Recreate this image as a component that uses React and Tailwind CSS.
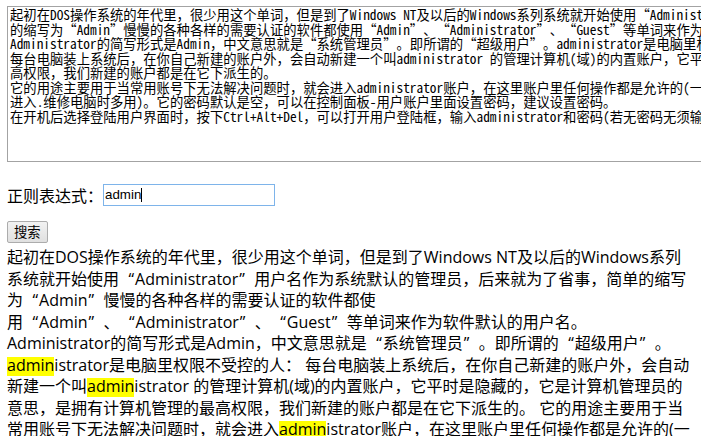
import React from "react";

const taText = [
  "起初在DOS操作系统的年代里，很少用这个单词，但是到了Windows NT及以后的Windows系列系统就开始使用“Administrator”用户名作为系统默认的管理员，后来就为了省事，简单",
  "的缩写为“Admin”慢慢的各种各样的需要认证的软件都使用“Admin”、“Administrator”、“Guest”等单词来作为软件默认的用户名。",
  "Administrator的简写形式是Admin，中文意思就是“系统管理员”。即所谓的“超级用户”。administrator是电脑里权限不受控的人：",
  "每台电脑装上系统后，在你自己新建的账户外，会自动新建一个叫administrator 的管理计算机(域)的内置账户，它平时是隐藏的，它是计算机管理员的意思，是拥有计算机管理的最",
  "高权限，我们新建的账户都是在它下派生的。",
  "它的用途主要用于当常用账号下无法解决问题时，就会进入administrator账户，在这里账户里任何操作都是允许的(一般在安全模式下才能",
  "进入.维修电脑时多用)。它的密码默认是空，可以在控制面板-用户账户里面设置密码，建议设置密码。",
  "在开机后选择登陆用户界面时，按下Ctrl+Alt+Del，可以打开用户登陆框，输入administrator和密码(若无密码无须输入)即可登陆。",
].join("\n");

function Hl({ children }) {
  return (
    <span className="inline-block bg-[#ffff00] leading-[17px] pb-[2px]">
      {children}
    </span>
  );
}

function T({ s }) {
  const parts = s.split(/([“”])/);
  return parts.map((p, i) => {
    if (p === "“")
      return (
        <span key={i} className="inline-block w-[16px] text-right leading-none pr-[1px]">
          {p}
        </span>
      );
    if (p === "”")
      return (
        <span key={i} className="inline-block w-[16px] text-left leading-none pl-[1px]">
          {p}
        </span>
      );
    return <React.Fragment key={i}>{p}</React.Fragment>;
  });
}

export default function App() {
  return (
    <div className="w-screen h-screen overflow-hidden bg-white text-black">
      <div className="flex flex-col items-start pl-[7px] pt-[6px]">
        <textarea
          readOnly
          wrap="off"
          lang="zh-CN"
          value={taText}
          className="w-[900px] h-[156px] shrink-0 resize-none overflow-hidden whitespace-pre border border-[#a3a3a3] bg-white pt-[1px] px-[2px] text-[13.33px] leading-[14.5px] text-black outline-none [text-spacing-trim:space-all] font-['Noto_Sans_Mono_CJK_SC','Noto_Sans_CJK_SC',monospace]"
        />

        <div className="mt-[22px] flex items-center font-['Noto_Sans_CJK_SC',sans-serif] text-[16px] leading-[22px]">
          <span className="[text-spacing-trim:space-all]">正则表达式：</span>
          <div className="relative">
            <input
              readOnly
              value="admin"
              className="box-border block h-[22px] w-[172px] border border-[#7eb4ea] bg-white pl-[1px] text-[13.33px] text-black outline-none font-['Liberation_Sans',sans-serif]"
            />
            <span className="absolute left-[38px] top-[4px] h-[14px] w-px bg-black" />
          </div>
        </div>

        <button className="mt-[15px] box-border h-[22px] rounded-[2px] border border-[#acacac] bg-gradient-to-b from-[#f2f2f2] to-[#e0e0e0] px-[6px] text-[13.33px] leading-[18px] text-black font-['Noto_Sans_CJK_SC',sans-serif]">
          搜索
        </button>

        <div
          lang="zh-CN"
          className="mt-[4px] whitespace-nowrap text-[16px] leading-[21.5px] [text-spacing-trim:space-all] font-['Open_Sans','Noto_Sans_CJK_SC',sans-serif]"
        >
          <T s="起初在DOS操作系统的年代里，很少用这个单词，但是到了Windows NT及以后的Windows系列" />
          <br />
          <T s="系统就开始使用“Administrator”用户名作为系统默认的管理员，后来就为了省事，简单的缩写" />
          <br />
          <T s="为“Admin”慢慢的各种各样的需要认证的软件都使" />
          <br />
          <T s="用“Admin”、“Administrator”、“Guest”等单词来作为软件默认的用户名。" />
          <br />
          <T s="Administrator的简写形式是Admin，中文意思就是“系统管理员”。即所谓的“超级用户”。" />
          <br />
          <Hl>admin</Hl>istrator是电脑里权限不受控的人： 每台电脑装上系统后，在你自己新建的账户外，会自动
          <br />
          新建一个叫<Hl>admin</Hl>istrator 的管理计算机(域)的内置账户，它平时是隐藏的，它是计算机管理员的
          <br />
          意思，是拥有计算机管理的最高权限，我们新建的账户都是在它下派生的。 它的用途主要用于当
          <br />
          常用账号下无法解决问题时，就会进入<Hl>admin</Hl>istrator账户，在这里账户里任何操作都是允许的(一
        </div>
      </div>
    </div>
  );
}
